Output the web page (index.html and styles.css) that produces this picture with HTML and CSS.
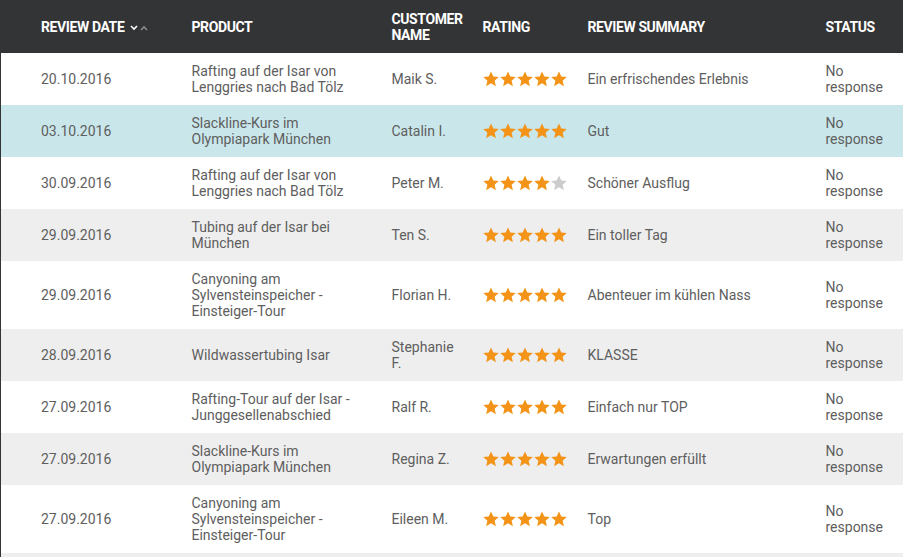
FILE: index.html
```html
<!DOCTYPE html>
<html lang="de">
<head>
<meta charset="utf-8">
<title>Reviews</title>
<link rel="stylesheet" href="styles.css">
</head>
<body>
<svg width="0" height="0" class="defs" aria-hidden="true">
  <defs>
    <path id="star" d="M8 0.4 L10.3 5.5 L15.8 6 L11.6 9.7 L12.9 15.2 L8 12.3 L3.1 15.2 L4.4 9.7 L0.2 6 L5.7 5.5 Z"/>
  </defs>
</svg>
<table class="reviews">
  <colgroup>
    <col class="c-date"><col class="c-product"><col class="c-customer"><col class="c-rating"><col class="c-summary"><col class="c-status">
  </colgroup>
  <thead>
    <tr>
      <th class="first">Review date <svg class="sort" width="19" height="6" viewBox="0 0 19 6"><path d="M1 1 L4 4 L7 1" fill="none" stroke="#fff" stroke-width="1.6"/><path d="M11 5 L14 2 L17 5" fill="none" stroke="#8a8b8d" stroke-width="1.6"/></svg></th>
      <th>Product</th>
      <th>Customer name</th>
      <th>Rating</th>
      <th>Review summary</th>
      <th>Status</th>
    </tr>
  </thead>
  <tbody>
    <tr class="white">
      <td class="first">20.10.2016</td><td>Rafting auf der Isar von Lenggries nach Bad Tölz</td><td>Maik S.</td>
      <td><span class="stars"><svg><use href="#star"/></svg><svg><use href="#star"/></svg><svg><use href="#star"/></svg><svg><use href="#star"/></svg><svg><use href="#star"/></svg></span></td>
      <td>Ein erfrischendes Erlebnis</td><td>No response</td>
    </tr>
    <tr class="active">
      <td class="first">03.10.2016</td><td>Slackline-Kurs im Olympiapark München</td><td>Catalin I.</td>
      <td><span class="stars"><svg><use href="#star"/></svg><svg><use href="#star"/></svg><svg><use href="#star"/></svg><svg><use href="#star"/></svg><svg><use href="#star"/></svg></span></td>
      <td>Gut</td><td>No response</td>
    </tr>
    <tr class="white">
      <td class="first">30.09.2016</td><td>Rafting auf der Isar von Lenggries nach Bad Tölz</td><td>Peter M.</td>
      <td><span class="stars"><svg><use href="#star"/></svg><svg><use href="#star"/></svg><svg><use href="#star"/></svg><svg><use href="#star"/></svg><svg class="off"><use href="#star"/></svg></span></td>
      <td>Schöner Ausflug</td><td>No response</td>
    </tr>
    <tr class="grey">
      <td class="first">29.09.2016</td><td>Tubing auf der Isar bei München</td><td>Ten S.</td>
      <td><span class="stars"><svg><use href="#star"/></svg><svg><use href="#star"/></svg><svg><use href="#star"/></svg><svg><use href="#star"/></svg><svg><use href="#star"/></svg></span></td>
      <td>Ein toller Tag</td><td>No response</td>
    </tr>
    <tr class="white">
      <td class="first">29.09.2016</td><td>Canyoning am Sylvensteinspeicher - Einsteiger-Tour</td><td>Florian H.</td>
      <td><span class="stars"><svg><use href="#star"/></svg><svg><use href="#star"/></svg><svg><use href="#star"/></svg><svg><use href="#star"/></svg><svg><use href="#star"/></svg></span></td>
      <td>Abenteuer im kühlen Nass</td><td>No response</td>
    </tr>
    <tr class="grey">
      <td class="first">28.09.2016</td><td>Wildwassertubing Isar</td><td>Stephanie F.</td>
      <td><span class="stars"><svg><use href="#star"/></svg><svg><use href="#star"/></svg><svg><use href="#star"/></svg><svg><use href="#star"/></svg><svg><use href="#star"/></svg></span></td>
      <td>KLASSE</td><td>No response</td>
    </tr>
    <tr class="white">
      <td class="first">27.09.2016</td><td>Rafting-Tour auf der Isar - Junggesellenabschied</td><td>Ralf R.</td>
      <td><span class="stars"><svg><use href="#star"/></svg><svg><use href="#star"/></svg><svg><use href="#star"/></svg><svg><use href="#star"/></svg><svg><use href="#star"/></svg></span></td>
      <td>Einfach nur TOP</td><td>No response</td>
    </tr>
    <tr class="grey">
      <td class="first">27.09.2016</td><td>Slackline-Kurs im Olympiapark München</td><td>Regina Z.</td>
      <td><span class="stars"><svg><use href="#star"/></svg><svg><use href="#star"/></svg><svg><use href="#star"/></svg><svg><use href="#star"/></svg><svg><use href="#star"/></svg></span></td>
      <td>Erwartungen erfüllt</td><td>No response</td>
    </tr>
    <tr class="white">
      <td class="first">27.09.2016</td><td>Canyoning am Sylvensteinspeicher - Einsteiger-Tour</td><td>Eileen M.</td>
      <td><span class="stars"><svg><use href="#star"/></svg><svg><use href="#star"/></svg><svg><use href="#star"/></svg><svg><use href="#star"/></svg><svg><use href="#star"/></svg></span></td>
      <td>Top</td><td>No response</td>
    </tr>
  </tbody>
</table>
<div class="next-row"></div>
</body>
</html>
```

FILE: styles.css
```css
html, body {
  margin: 0;
  padding: 0;
  background: #ffffff;
  overflow: hidden;
}

.defs {
  position: absolute;
  width: 0;
  height: 0;
}

.reviews {
  width: 903px;
  border-collapse: collapse;
  table-layout: fixed;
  font-family: Roboto, "Liberation Sans", sans-serif;
  font-size: 14px;
  line-height: 16px;
  color: #5e5e5e;
  border-left: 1px solid #333436;
}

.next-row {
  height: 20px;
  background: #eeeeee;
  border-left: 1px solid #333436;
}

.c-date { width: 191px; }
.c-product { width: 200px; }
.c-customer { width: 91px; }
.c-rating { width: 105px; }
.c-summary { width: 238px; }
.c-status { width: 77px; }

.reviews th {
  background: #333436;
  color: #ffffff;
  font-weight: 700;
  font-size: 14px;
  letter-spacing: -0.4px;
  text-transform: uppercase;
  text-align: left;
  vertical-align: middle;
  padding: 11px 14px 10px 0;
}

.reviews td {
  text-align: left;
  vertical-align: middle;
  padding: 10px 18px 10px 0;
}

.reviews td:last-child,
.reviews th:last-child {
  padding-right: 6px;
}

.reviews .first {
  padding-left: 40px;
}

.sort {
  margin-left: 3px;
  vertical-align: 1px;
}

.white { background: #ffffff; }
.grey { background: #eeeeee; }
.active { background: #c9e6ea; }

.stars {
  display: flex;
  gap: 1px;
}

.stars svg {
  width: 16px;
  height: 16px;
  fill: #f39419;
}

.stars svg.off {
  fill: #cccccc;
}
```
